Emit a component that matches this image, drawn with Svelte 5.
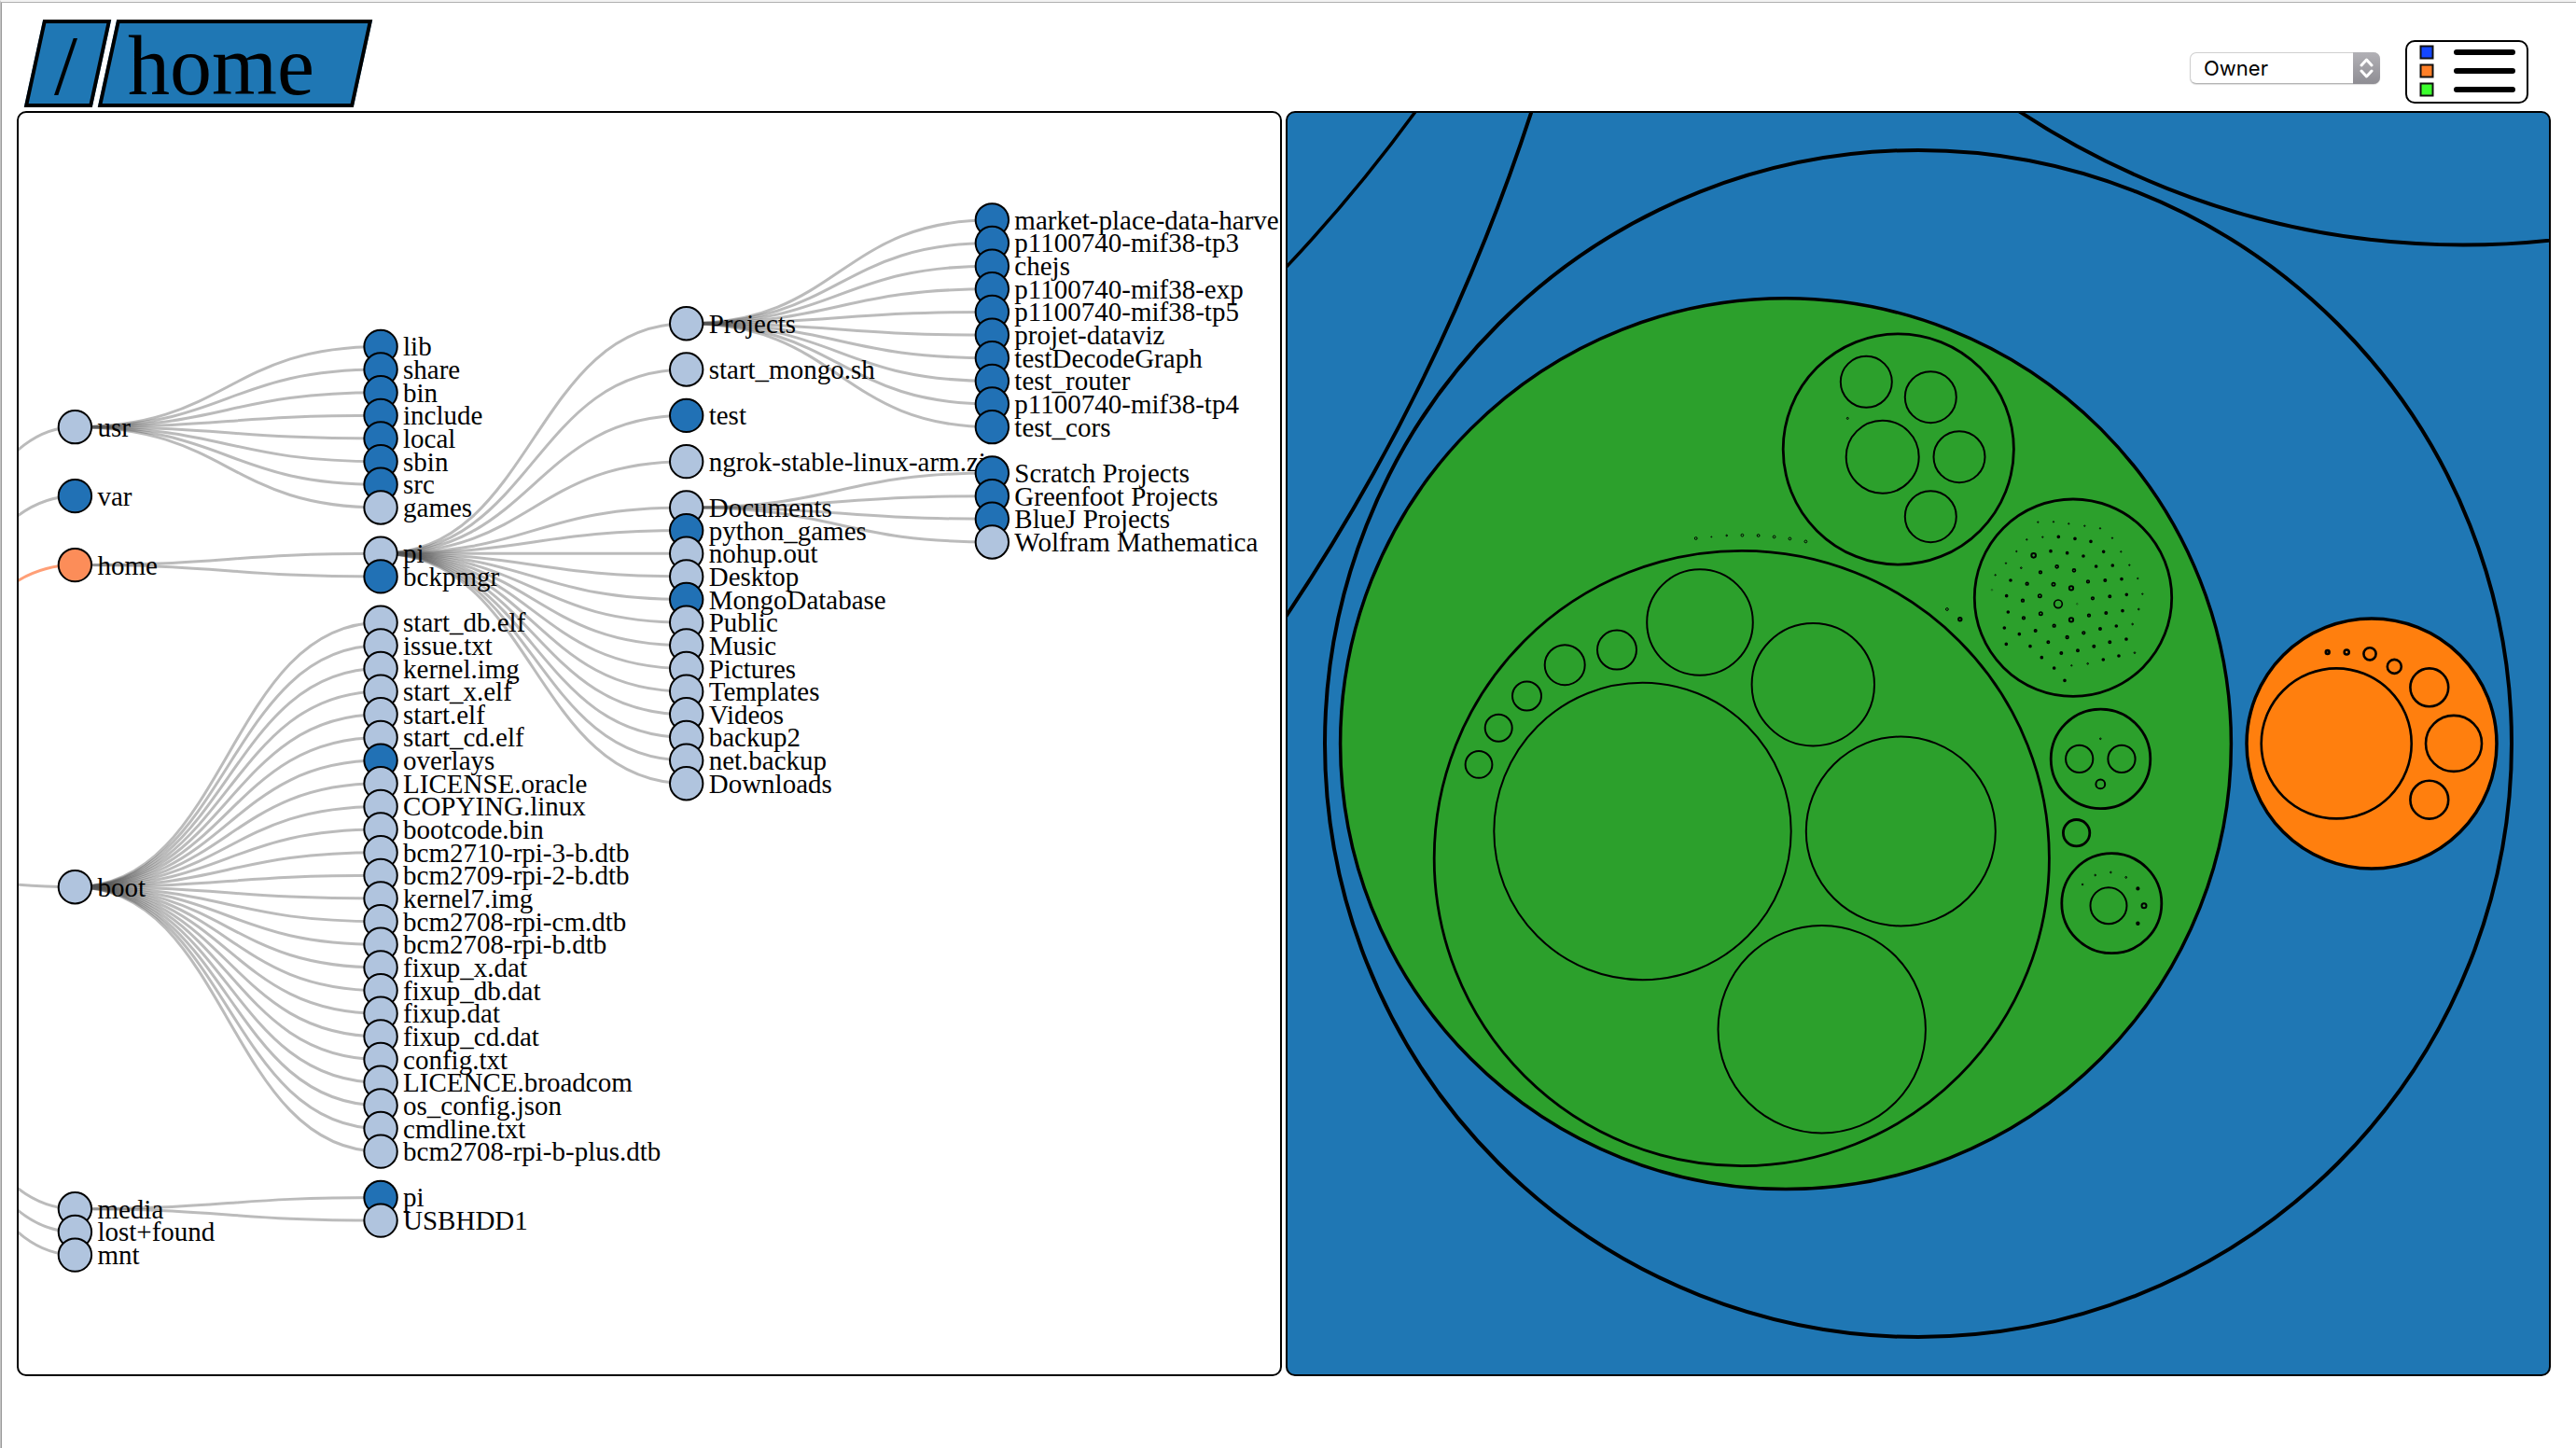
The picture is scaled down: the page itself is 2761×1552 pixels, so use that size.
<script>
  // Tree layout: columns are evenly spaced, rows are counted in node steps.
  const colX = (c) => 80.4 + c * 327.65;
  const rowY = (k) => 371.4 + k * 24.65;

  const usr = ['lib', 'share', 'bin', 'include', 'local', 'sbin', 'src', 'games'];
  const boot = [
    'start_db.elf', 'issue.txt', 'kernel.img', 'start_x.elf', 'start.elf', 'start_cd.elf',
    'overlays', 'LICENSE.oracle', 'COPYING.linux', 'bootcode.bin', 'bcm2710-rpi-3-b.dtb',
    'bcm2709-rpi-2-b.dtb', 'kernel7.img', 'bcm2708-rpi-cm.dtb', 'bcm2708-rpi-b.dtb',
    'fixup_x.dat', 'fixup_db.dat', 'fixup.dat', 'fixup_cd.dat', 'config.txt',
    'LICENCE.broadcom', 'os_config.json', 'cmdline.txt', 'bcm2708-rpi-b-plus.dtb'
  ];
  const piRest = [
    'python_games', 'nohup.out', 'Desktop', 'MongoDatabase', 'Public', 'Music', 'Pictures',
    'Templates', 'Videos', 'backup2', 'net.backup', 'Downloads'
  ];
  const projects = [
    'market-place-data-harve', 'p1100740-mif38-tp3', 'chejs', 'p1100740-mif38-exp',
    'p1100740-mif38-tp5', 'projet-dataviz', 'testDecodeGraph', 'test_router',
    'p1100740-mif38-tp4', 'test_cors'
  ];
  const documents = ['Scratch Projects', 'Greenfoot Projects', 'BlueJ Projects', 'Wolfram Mathematica'];

  const closed = new Set([
    'var', 'bckpmgr', 'overlays', 'test', 'python_games', 'MongoDatabase',
    ...usr.slice(0, 7), ...projects, ...documents.slice(0, 3)
  ]);

  const root = [-1, 21.65];
  const usrAt = [0, 3.5];
  const homeAt = [0, 9.5];
  const bootAt = [0, 23.5];
  const mediaAt = [0, 37.5];
  const piAt = [1, 9];
  const projectsAt = [2, -1];
  const documentsAt = [2, 7];

  const node = (name, c, k, parent, kind) => ({
    name, c, k, parent, kind: kind ?? (closed.has(name) ? 'closed' : 'open')
  });

  const nodes = [
    node('usr', ...usrAt, root),
    node('var', 0, 6.5, root),
    node('home', ...homeAt, root, 'selected'),
    node('boot', ...bootAt, root),
    node('media', ...mediaAt, root),
    node('lost+found', 0, 38.5, root),
    node('mnt', 0, 39.5, root),
    ...usr.map((n, i) => node(n, 1, i, usrAt)),
    node('pi', ...piAt, homeAt),
    node('bckpmgr', 1, 10, homeAt),
    ...boot.map((n, i) => node(n, 1, 12 + i, bootAt)),
    node('pi', 1, 37, mediaAt, 'closed'),
    node('USBHDD1', 1, 38, mediaAt),
    node('Projects', ...projectsAt, piAt),
    node('start_mongo.sh', 2, 1, piAt),
    node('test', 2, 3, piAt),
    node('ngrok-stable-linux-arm.zip', 2, 5, piAt),
    node('Documents', ...documentsAt, piAt),
    ...piRest.map((n, i) => node(n, 2, 8 + i, piAt)),
    ...projects.map((n, i) => node(n, 3, i - 5.5, projectsAt)),
    ...documents.map((n, i) => node(n, 3, 5.5 + i, documentsAt))
  ];

  function link(n) {
    const sx = colX(n.parent[0]), sy = rowY(n.parent[1]);
    const tx = colX(n.c), ty = rowY(n.k);
    const mx = (sx + tx) / 2;
    return `M${sx},${sy}C${mx},${sy} ${mx},${ty} ${tx},${ty}`;
  }

  // Circle packing: [cx, cy, r]
  const greenGroups = [
    [2034.8, 481.5, 123.6], [2222, 640.7, 105.7], [2251.5, 813.4, 53.3],
    [2225.6, 892.7, 14.2], [2263.3, 968.2, 53.5], [1866.8, 920, 329.6]
  ];
  const greenLeaves = [
    [2000.3, 409.3, 27.5], [2069.3, 425.7, 27.5], [2100, 489.7, 27.5], [2069.3, 553.7, 27.5],
    [2017.7, 489.7, 39], [1760.5, 891, 159.2], [1822, 667, 56.8], [1943.3, 733.7, 65.7],
    [1733, 696.6, 21], [1677.2, 712.7, 21.5], [1636.5, 746, 15.5], [1606.2, 780.3, 14.5],
    [1585, 819.4, 14.4], [2037.3, 891, 101.5], [1952.7, 1103.2, 111.2],
    [2228.7, 813.4, 14.6], [2274, 813.4, 14.6], [2251.3, 840.4, 4.9], [2260, 970.7, 19.5]
  ];
  const specks = [
    [1980.3, 448.4, 1], [1817.7, 577, 1.4], [1834.3, 575.4, 0.5], [1850.7, 574, 0.8],
    [1867.4, 573.7, 1.4], [1884.6, 574, 1.4], [1901.6, 575.4, 1.4], [1918.4, 577.4, 1.4],
    [1935.4, 580.4, 1.4], [2086.9, 653, 1.4], [2251.3, 791.8, 0.8],
    [2232.1, 948, 0.8], [2245.7, 938, 0.8], [2262.4, 935, 0.8], [2278.7, 940.4, 0.9]
  ];
  const beads = [
    [2100.8, 663.8, 1.7], [2291.4, 952.4, 1.1], [2298, 970.7, 2.5], [2291.4, 989.7, 1.2]
  ];
  const orangeLeaves = [
    [2504.2, 796.9, 80.5], [2630, 796.9, 30], [2603.8, 736.8, 20.4], [2603.8, 857.2, 20.4],
    [2566.3, 714.4, 7.5], [2540, 700.8, 6.6], [2515.2, 699, 2.5], [2494.7, 699, 1.9]
  ];

  // Dense cluster, in thirds of a unit from (2080, 520)
  const cluster = [
    [313, 119, 3], [363, 118, 3], [412, 124, 3], [463, 131, 3], [513, 139, 3],
    [277, 175, 3], [328, 167, 3], [379, 166, 4], [432, 172, 4], [483, 181, 4], [552, 170, 3],
    [244, 213, 3], [354, 212, 4], [407, 218, 4], [459, 228, 4], [524, 214, 4], [580, 214, 3],
    [210, 251, 3], [259, 266, 3.5], [374, 262, 5.5], [429, 274, 5.5], [500, 261, 4], [553, 258, 4], [607, 257, 3],
    [176, 289, 3], [225, 306, 4], [321, 280, 5], [278, 317, 5], [363, 319, 6], [474, 310, 5], [529, 306, 4.5],
    [582, 302, 4], [634, 300, 3], [212, 356, 4], [264, 371, 5], [319, 356, 6], [489, 364, 5],
    [544, 358, 4.5], [598, 352, 4], [649, 350, 3], [217, 408, 4], [267, 427, 5], [322, 413, 6],
    [477, 419, 5], [532, 411, 4.5], [585, 404, 4], [637, 399, 3.5], [205, 459, 4], [253, 479, 4],
    [305, 468, 4.5], [365, 452, 5], [407, 489, 5], [460, 475, 5], [513, 462, 4.5], [565, 453, 4],
    [617, 447, 3.5], [211, 511, 4], [288, 518, 4], [346, 505, 4.5], [388, 540, 4.5], [441, 532, 4.5],
    [493, 518, 4.5], [544, 505, 4.5], [597, 495, 4], [624, 539, 3.5], [325, 554, 4], [365, 588, 4],
    [421, 580, 3], [473, 574, 3.5], [523, 561, 4], [573, 549, 4], [399, 628, 4]
  ];

  let colorBy = 'Owner';
</script>

<div class="page">
  <header>
    <nav aria-label="Path">
      <a class="crumb" href="#/"><span>/</span></a>
      <a class="crumb wide" href="#/home"><span>home</span></a>
    </nav>
    <div class="controls">
      <div class="picker">
        <select aria-label="Colour by" bind:value={colorBy}>
          <option>Owner</option>
          <option>Group</option>
          <option>Type</option>
        </select>
        <svg class="arrows" viewBox="0 0 29 34" aria-hidden="true">
          <path d="M9 14l5.500-6 5.500 6M9 20l5.500 6 5.500-6" />
        </svg>
      </div>
      <button type="button" aria-label="Legend">
        <svg viewBox="0 0 128 64" aria-hidden="true">
          <g class="swatches">
            <rect x="14.500" y="4.500" width="13" height="13" fill="#1447ff" />
            <rect x="14.500" y="24.500" width="13" height="13" fill="#ff7f27" />
            <rect x="14.500" y="44.500" width="13" height="13" fill="#3cff2e" />
          </g>
          <path class="bars" d="M53 11H113M53 31H113M53 51H113" />
        </svg>
      </button>
    </div>
  </header>

  <main>
    <section class="panel" aria-label="Directory tree">
      <svg viewBox="20 121 1352 1352">
        {#each nodes as n}
          <path class="link" class:active={n.kind === 'selected'} d={link(n)} />
        {/each}
        {#each nodes as n}
          <circle class="node {n.kind}" cx={colX(n.c)} cy={rowY(n.k)} r="17.700" />
          <text x={colX(n.c) + 24} y={rowY(n.k)} dy="10">{n.name}</text>
        {/each}
      </svg>
    </section>

    <section class="panel pack" aria-label="Circle packing">
      <svg viewBox="1380 121 1352 1352">
        <path class="arc thin" d="M1376 289A1700 1700 0 0 0 1519 117" />
        <path class="arc" d="M1376 664A2200 2200 0 0 0 1643 115" />
        <circle class="arc" cx="2640" cy="-598.500" r="861" />
        <circle class="arc" cx="2056" cy="797" r="636" />
        <circle class="green top" cx="1914" cy="797.200" r="477.400" />
        <circle class="orange top" cx="2542" cy="797" r="134" />
        {#each greenGroups as [x, y, r]}
          <circle class="green group" cx={x} cy={y} {r} />
        {/each}
        {#each greenLeaves as [x, y, r]}
          <circle class="green leaf" cx={x} cy={y} {r} />
        {/each}
        {#each specks as [x, y, r]}
          <circle class="green speck" cx={x} cy={y} {r} />
        {/each}
        {#each beads as [x, y, r]}
          <circle class="green bead" cx={x} cy={y} {r} />
        {/each}
        <g class="cluster" transform="translate(2080 520) scale(0.3333)">
          {#each cluster as [x, y, r]}
            <circle cx={x} cy={y} r={r - 1} stroke-width={r > 3.5 ? 5 : 3} />
          {/each}
          <circle cx="378" cy="382" r="13" stroke-width="5" />
          <circle cx="299" cy="226" r="7" stroke-width="6" />
          <circle cx="420" cy="331" r="6.500" stroke-width="6" />
          <circle cx="420" cy="433" r="6.500" stroke-width="6" />
          <circle cx="165" cy="337" r="2.500" stroke-width="1" />
          <circle cx="439" cy="382" r="2.500" stroke-width="1" />
        </g>
        {#each orangeLeaves as [x, y, r]}
          <circle class="orange inner" cx={x} cy={y} {r} />
        {/each}
      </svg>
    </section>
  </main>
</div>

<style>
  :global(body) {
    margin: 0;
    background: #fff;
  }

  .page {
    box-sizing: border-box;
    min-height: 100vh;
    padding: 1px 27px 0 17px;
    border-top: 2px solid #f2f2f2;
    border-left: 1px solid #c2c2c2;
    box-shadow: inset 0 1px #b0b0b0, inset 1px 0 #999;
    font-family: 'Liberation Serif', 'Times New Roman', serif;
    color: #000;
  }

  header {
    display: flex;
    justify-content: space-between;
    align-items: flex-end;
    padding: 18px 24px 4px 18px;
  }

  nav {
    display: flex;
    gap: 6px;
  }

  .crumb {
    position: relative;
    display: flex;
    align-items: center;
    box-sizing: border-box;
    height: 94px;
    padding: 6px 26px 0 22px;
    font-size: 90px;
    line-height: 94px;
    color: #000;
    text-decoration: none;
  }

  .crumb.wide {
    padding: 6px 52px 0 22px;
  }

  .crumb::before {
    content: '';
    position: absolute;
    inset: 0;
    border: 4px solid #000;
    background: #1f77b4;
    transform: skewX(-12.250deg);
  }

  .crumb span {
    position: relative;
  }

  .controls {
    display: flex;
    align-items: center;
    gap: 27px;
    padding-bottom: 4px;
  }

  .picker {
    display: grid;
    width: 204px;
    height: 34px;
    margin-bottom: 8px;
  }

  .picker > * {
    grid-area: 1 / 1;
  }

  select {
    appearance: none;
    box-sizing: border-box;
    width: 100%;
    height: 34px;
    padding: 0 30px 0 14px;
    border: 1px solid #cfcfcf;
    border-bottom-color: #b4b4b4;
    border-radius: 7px;
    background: #fff;
    box-shadow: 0 1px 1px #ddd;
    color: #000;
    font: 22px 'Inter', 'Liberation Sans', sans-serif;
  }

  .arrows {
    justify-self: end;
    width: 29px;
    height: 34px;
    border-radius: 0 7px 7px 0;
    background: linear-gradient(#b2b1b6, #8e8d93);
    pointer-events: none;
  }

  .arrows path {
    fill: none;
    stroke: #fff;
    stroke-width: 3;
    stroke-linecap: round;
    stroke-linejoin: round;
  }

  button {
    box-sizing: border-box;
    width: 132px;
    height: 68px;
    padding: 0;
    border: 2px solid #000;
    border-radius: 10px;
    background: #fff;
  }

  button svg {
    display: block;
    width: 100%;
  }

  .swatches {
    stroke: #111;
    stroke-width: 2;
  }

  .bars {
    stroke: #000;
    stroke-width: 6;
    stroke-linecap: round;
  }

  main {
    display: grid;
    grid-template-columns: 1fr 1fr;
    gap: 4px;
  }

  .panel {
    border: 2px solid #000;
    border-radius: 10px;
    overflow: hidden;
  }

  .panel svg {
    display: block;
    width: 100%;
  }

  .pack {
    background: #1f77b4;
  }

  .link {
    fill: none;
    stroke: #555;
    stroke-opacity: 0.4;
    stroke-width: 3;
  }

  .link.active {
    stroke: #ff7f4a;
    stroke-opacity: 0.75;
  }

  .node {
    stroke: #000;
    stroke-width: 2;
  }

  .node.open {
    fill: #b0c4de;
  }

  .node.closed {
    fill: #2171b5;
  }

  .node.selected {
    fill: #fc8d59;
  }

  text {
    font-size: 29px;
  }

  .pack circle,
  .pack path {
    stroke: #000;
  }

  .arc {
    fill: none;
    stroke-width: 4;
  }

  .arc.thin {
    stroke-width: 3.500;
  }

  .green {
    fill: #2ca02c;
  }

  .orange {
    fill: #ff7f0e;
  }

  .top {
    stroke-width: 3.500;
  }

  .group {
    stroke-width: 2.800;
  }

  .leaf {
    stroke-width: 2;
  }

  .speck {
    stroke-width: 1;
  }

  .bead {
    stroke-width: 2;
  }

  .inner {
    stroke-width: 2.600;
  }

  .cluster {
    fill: none;
  }
</style>
